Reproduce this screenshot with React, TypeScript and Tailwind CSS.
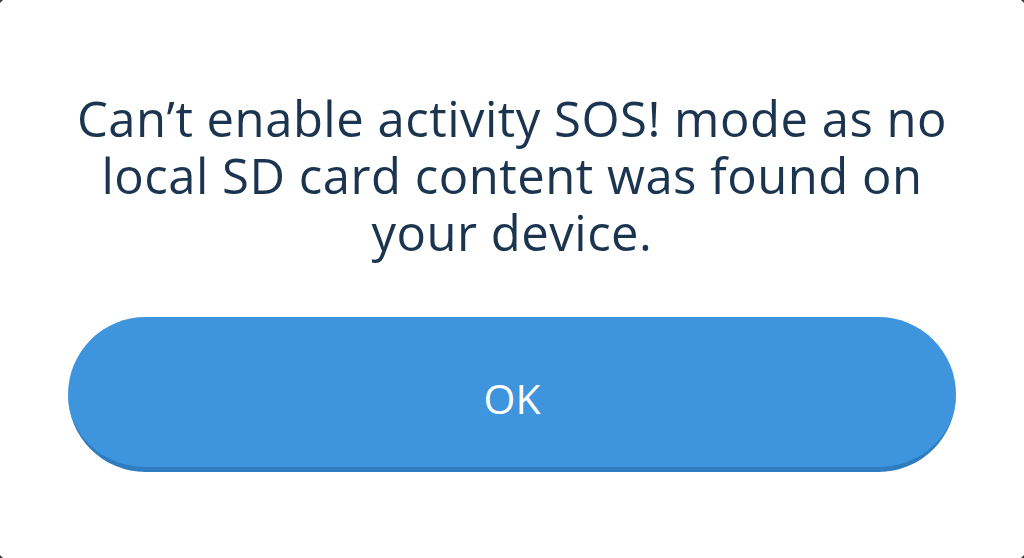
export default function App() {
  return (
    <div className="h-[558px] w-[1024px] overflow-hidden bg-[#3b3b3b]">
      <div
        className="-mx-[12px] -my-[12px] flex h-[582px] flex-col items-center rounded-[46px] bg-white px-[60px] pt-[102px]"
        style={{ fontFamily: '"Open Sans", "Noto Sans", sans-serif' }}
      >
        <p className="whitespace-nowrap text-center text-[49px] leading-[57px] tracking-[0.5px] text-[#1b3550]">
          Can’t enable activity SOS! mode as no
          <br />
          local SD card content was found on
          <br />
          your device.
        </p>

        <button className="mt-[56px] flex h-[155px] w-[888px] items-center justify-center rounded-full border-b-[5px] border-[#2f7cc0] bg-[#3e95dd] pt-[14px] text-[41px] text-white">
          OK
        </button>
      </div>
    </div>
  );
}
